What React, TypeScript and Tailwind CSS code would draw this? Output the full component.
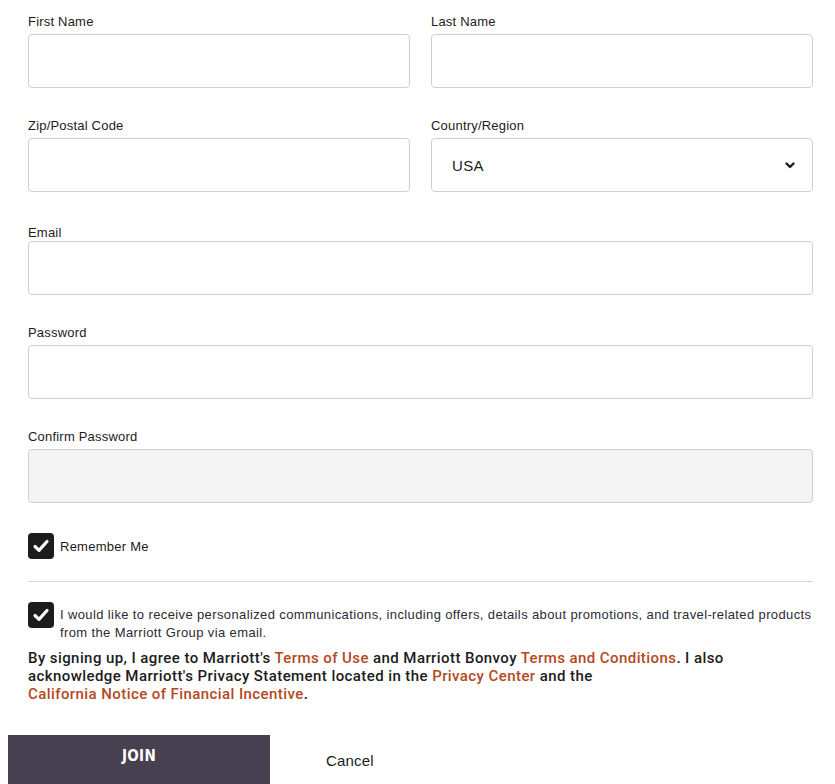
import React from "react";

const sans = "font-['Liberation_Sans',Arial,sans-serif]";

function Label({ text, className = "" }: { text: string; className?: string }) {
  return (
    <label
      className={`block h-4 text-[13px] leading-4 tracking-[0.2px] text-[#1c1c1c] ${className}`}
    >
      {text}
    </label>
  );
}

function Field({
  label,
  className = "",
  labelGap = "mb-1",
  disabled = false,
}: {
  label: string;
  className?: string;
  labelGap?: string;
  disabled?: boolean;
}) {
  return (
    <div className={className}>
      <Label text={label} className={labelGap} />
      <div
        className={`h-[54px] rounded-[4px] border border-[#cfcfcf] ${
          disabled ? "bg-[#f4f4f4]" : "bg-white"
        }`}
      />
    </div>
  );
}

function Check() {
  return (
    <span className="flex h-[26px] w-[26px] shrink-0 items-center justify-center rounded-[4px] bg-[#1c1c1c]">
      <svg width="20" height="20" viewBox="0 0 20 20" aria-hidden>
        <path
          d="M4 10.5 L8 14.3 L16 5.5"
          fill="none"
          stroke="#fff"
          strokeWidth="3.2"
          strokeLinecap="round"
          strokeLinejoin="round"
        />
      </svg>
    </span>
  );
}

const link = "text-[#b3491f]";

export default function App() {
  return (
    <div className={`h-[784px] overflow-hidden bg-white ${sans}`}>
      <div className="pl-[28px] pr-[22px] pt-[14px]">
        <div className="grid grid-cols-2 gap-x-[21px]">
          <Field label="First Name" />
          <Field label="Last Name" />
          <Field label="Zip/Postal Code" className="mt-[30px]" />
          <div className="mt-[30px]">
            <Label text="Country/Region" className="mb-1" />
            <div className="flex h-[54px] items-center justify-between rounded-[4px] border border-[#cfcfcf] bg-white pl-[20px] pr-[17px]">
              <span className="pt-[3px] text-[15px] tracking-[0.3px] text-[#1c1c1c]">USA</span>
              <svg width="10" height="7" viewBox="0 0 10 7" aria-hidden>
                <path
                  d="M1.5 1.5 L5 5 L8.5 1.5"
                  fill="none"
                  stroke="#1c1c1c"
                  strokeWidth="2.4"
                  strokeLinecap="round"
                  strokeLinejoin="round"
                />
              </svg>
            </div>
          </div>
        </div>

        <Field label="Email" className="mt-[33px]" labelGap="mb-0" />
        <Field label="Password" className="mt-[30px]" />
        <Field label="Confirm Password" className="mt-[30px]" disabled />

        <div className="mt-[30px] flex items-center gap-[6px]">
          <Check />
          <span className="pt-[1px] text-[13px] tracking-[0.25px] text-[#1c1c1c]">
            Remember Me
          </span>
        </div>

        <div className="mt-[22px] h-px bg-[#d6d6d6]" />

        <div className="mt-[20px] flex items-start gap-[6px]">
          <Check />
          <p className="mt-[4px] text-[13px] leading-[18px] tracking-[0.38px] text-[#2e2a33]">
            I would like to receive personalized communications, including offers, details
            about promotions, and travel-related products
            <br />
            from the Marriott Group via email.
          </p>
        </div>

        <p className="mt-[7px] font-['Roboto',sans-serif] text-[15px] font-medium leading-[18px] tracking-[0.42px] text-[#1c1c1c]">
          By signing up, I agree to Marriott's <span className={link}>Terms of Use</span> and
          Marriott Bonvoy <span className={link}>Terms and Conditions</span>. I also
          <br />
          acknowledge Marriott's Privacy Statement located in the{" "}
          <span className={link}>Privacy Center</span> and the
          <br />
          <span className={link}>California Notice of Financial Incentive</span>.
        </p>

        <div className="-ml-[20px] mt-[32px] flex items-start">
          <button
            type="button"
            className="flex h-[49px] w-[262px] items-start justify-center bg-[#464050] pt-[12px] font-['DejaVu_Sans_Condensed',sans-serif] text-[15px] font-bold leading-[18px] tracking-[0.3px] text-white"
          >
            JOIN
          </button>
          <button
            type="button"
            className="ml-[56px] mt-[17px] text-[15px] leading-[18px] tracking-[0.2px] text-[#1c1c1c]"
          >
            Cancel
          </button>
        </div>
      </div>
    </div>
  );
}
